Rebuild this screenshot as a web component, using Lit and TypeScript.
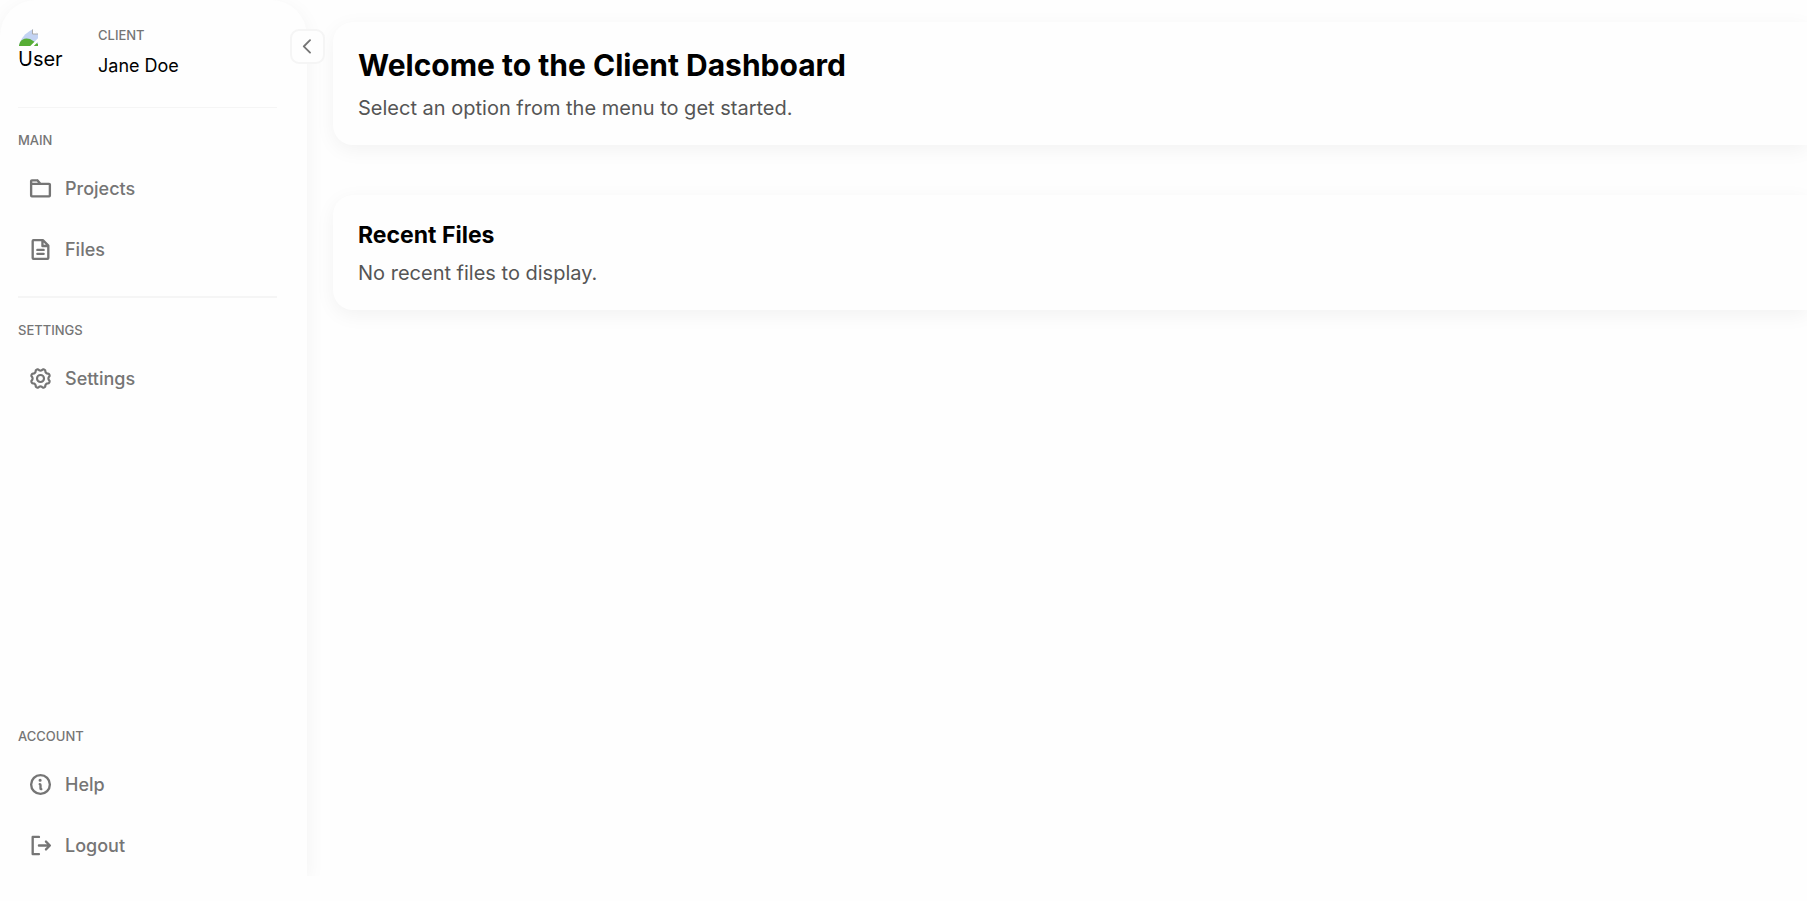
import { LitElement, html, css, svg } from "lit";
import { customElement, state } from "lit/decorators.js";

const ICONS: Record<string, string> = {
  folder:
    "M216,68H133.39l-26-29.29a20,20,0,0,0-15-6.71H40A20,20,0,0,0,20,52V200.62A19.41,19.41,0,0,0,39.38,220H216.89A19.13,19.13,0,0,0,236,200.89V88A20,20,0,0,0,216,68ZM44,56H90.61l10.67,12H44ZM212,196H44V92H212Z",
  file:
    "M216.49,79.52l-56-56A12,12,0,0,0,152,20H56A20,20,0,0,0,36,40V216a20,20,0,0,0,20,20H200a20,20,0,0,0,20-20V88A12,12,0,0,0,216.49,79.52ZM160,57l23,23H160ZM60,212V44h76V92a12,12,0,0,0,12,12h48V212Zm112-80a12,12,0,0,1-12,12H96a12,12,0,0,1,0-24h64A12,12,0,0,1,172,132Zm0,40a12,12,0,0,1-12,12H96a12,12,0,0,1,0-24h64A12,12,0,0,1,172,172Z",
  info:
    "M108,84a16,16,0,1,1,16,16A16,16,0,0,1,108,84Zm128,44A108,108,0,1,1,128,20,108.12,108.12,0,0,1,236,128Zm-24,0a84,84,0,1,0-84,84A84.09,84.09,0,0,0,212,128Zm-72,36.68V132a20,20,0,0,0-20-20,12,12,0,0,0-4,23.32V168a20,20,0,0,0,20,20,12,12,0,0,0,4-23.32Z",
  logout:
    "M124,216a12,12,0,0,1-12,12H48a12,12,0,0,1-12-12V40A12,12,0,0,1,48,28h64a12,12,0,0,1,0,24H60V204h52A12,12,0,0,1,124,216Zm108.49-96.49-40-40a12,12,0,0,0-17,17L195,116H112a12,12,0,0,0,0,24h83l-19.52,19.51a12,12,0,0,0,17,17l40-40A12,12,0,0,0,232.49,119.51Z",
  caret:
    "M162.49,191.51a12,12,0,0,1-17,17l-80-80a12,12,0,0,1,0-17l80-80a12,12,0,0,1,17,17L91,120Z",
};

/* Outline of the eight-lobed gear: lobes between the axes, shallow notches on them. */
function gearOutline(): string {
  const pts: string[] = [];
  for (let i = 0; i < 96; i++) {
    const a = (i / 96) * Math.PI * 2;
    const c = -Math.cos(a * 8);
    const r = 90 + 9 * Math.sign(c) * Math.pow(Math.abs(c), 0.5);
    pts.push(`${(128 + r * Math.cos(a)).toFixed(1)},${(128 + r * Math.sin(a)).toFixed(1)}`);
  }
  return `M${pts.join("L")}Z`;
}

function icon(name: string) {
  if (name === "gear") {
    return html`<svg viewBox="0 0 256 256" fill="none" stroke="currentColor" stroke-width="22" stroke-linejoin="round" aria-hidden="true">
      ${svg`<path d=${gearOutline()}></path><circle cx="128" cy="128" r="36"></circle>`}
    </svg>`;
  }
  return html`<svg viewBox="0 0 256 256" fill="currentColor" aria-hidden="true">${svg`<path d=${ICONS[name]}></path>`}</svg>`;
}

@customElement("app-root")
export class AppRoot extends LitElement {
  @state() private collapsed = false;

  static styles = css`
    :host {
      display: block;
      box-sizing: border-box;
      height: 100vh;
      padding-bottom: 25px;
      background: #fefefe;
      color: #000;
      font-family: Inter, sans-serif;
      font-size: 20px;
    }
    * { box-sizing: border-box; margin: 0; }
    .layout { display: flex; height: 100%; overflow: hidden; }
    .sidebar {
      position: relative;
      flex: none;
      display: flex;
      flex-direction: column;
      width: 307px;
      padding: 27px 30px 0 18px;
      background: #fefefe;
      border-radius: 36px 36px 0 0;
      box-shadow: 0 5px 20px rgba(0, 0, 0, 0.05);
    }
    .sidebar.collapsed { width: 90px; }
    .sidebar.collapsed .user, .sidebar.collapsed .heading, .sidebar.collapsed .link span { visibility: hidden; }
    .toggle {
      position: absolute;
      top: 29px;
      right: -18px;
      display: grid;
      place-items: center;
      width: 35px;
      height: 35px;
      padding: 0;
      border: 2px solid #f5f5f5;
      border-radius: 9px;
      background: #fefefe;
      color: #757575;
      cursor: pointer;
    }
    .toggle svg { width: 20px; height: 20px; }
    .user { display: flex; gap: 30px; height: 81px; border-bottom: 1px solid #f5f5f5; }
    .avatar { width: 50px; height: 50px; overflow: hidden; border-radius: 50%; line-height: 24px; }
    .avatar svg { display: block; width: 20px; height: 20px; }
    .role, .heading {
      font-size: 13px;
      line-height: 16px;
      font-weight: 500;
      color: #757575;
      text-transform: uppercase;
    }
    .name { margin-top: 12px; font-size: 18px; line-height: 22px; }
    .group { padding: 24px 0 16px; }
    .group + .group { border-top: 2px solid #f5f5f5; }
    .group.account { margin-top: auto; border: 0; padding-bottom: 0; }
    .list { padding: 0; list-style: none; margin-top: 10px; }
    .link {
      display: flex;
      align-items: center;
      gap: 12px;
      height: 61px;
      padding: 0 10px;
      color: #757575;
      font-size: 18px;
      font-weight: 500;
      text-decoration: none;
    }
    .link svg { width: 25px; height: 25px; }
    .main { flex: 1; min-width: 0; padding: 22px 0 0 26px; }
    .card {
      padding: 25px;
      background: #fefefe;
      border-radius: 20px 0 0 20px;
      box-shadow: 0 5px 20px rgba(0, 0, 0, 0.05);
    }
    .card + .card { margin-top: 50px; }
    .title { font-size: 30px; line-height: 36px; font-weight: 700; }
    .subtitle { font-size: 23px; line-height: 30px; font-weight: 700; }
    .text { margin-top: 13px; color: #555; line-height: 24px; }
    .subtitle + .text { margin-top: 11px; }
  `;

  private item(name: string, label: string) {
    return html`<li><a class="link" href="#${label.toLowerCase()}">${icon(name)}<span>${label}</span></a></li>`;
  }

  render() {
    return html`
      <div class="layout">
        <aside class="sidebar ${this.collapsed ? "collapsed" : ""}">
          <button class="toggle" aria-label="Toggle menu" @click=${() => (this.collapsed = !this.collapsed)}>${icon("caret")}</button>
          <div class="user">
            <div class="avatar">
              <svg viewBox="0 0 20 20" aria-hidden="true">
                <path d="M1 1H14L20 7V19H1Z" fill="#c3d3f3"></path>
                <path d="M1 19V16Q5 10 12 12L20 17V19Z" fill="#56ad35"></path>
                <path d="M14.5 1V7H20" fill="#fff" stroke="#aaa"></path>
                <path d="M12 21L22 11" stroke="#fff" stroke-width="2.5"></path>
              </svg>
              User
            </div>
            <div>
              <p class="role">Client</p>
              <p class="name">Jane Doe</p>
            </div>
          </div>
          <nav class="group">
            <h2 class="heading">Main</h2>
            <ul class="list">${this.item("folder", "Projects")}${this.item("file", "Files")}</ul>
          </nav>
          <nav class="group">
            <h2 class="heading">Settings</h2>
            <ul class="list">${this.item("gear", "Settings")}</ul>
          </nav>
          <nav class="group account">
            <h2 class="heading">Account</h2>
            <ul class="list">${this.item("info", "Help")}${this.item("logout", "Logout")}</ul>
          </nav>
        </aside>
        <main class="main">
          <section class="card">
            <h1 class="title">Welcome to the Client Dashboard</h1>
            <p class="text">Select an option from the menu to get started.</p>
          </section>
          <section class="card">
            <h2 class="subtitle">Recent Files</h2>
            <p class="text">No recent files to display.</p>
          </section>
        </main>
      </div>
    `;
  }
}
